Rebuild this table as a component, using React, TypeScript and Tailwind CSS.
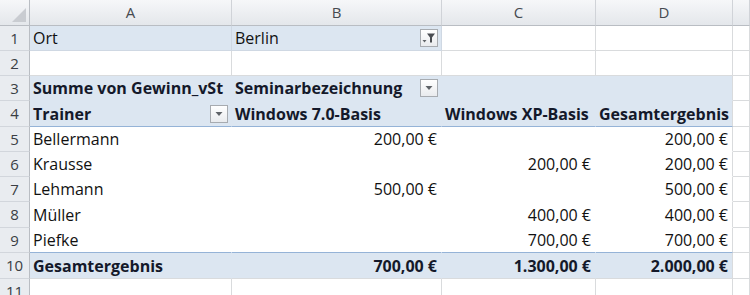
import React from 'react';

const BLUE = 'bg-[#dce6f1]';

type Cell = {
  text?: string;
  bold?: boolean;
  right?: boolean;
  cls: string;
  icon?: 'filter' | 'drop';
};

const grid = 'bg-white border-r border-b border-[#d9dbdd]';
const gridOnlyB = 'bg-white border-b border-[#d9dbdd] border-r border-r-[#d9dbdd]';

// pivot body cells: no visible gridlines
const body = 'bg-white border-r border-b border-white';
const bodyLast = 'bg-white border-r border-r-[#d9dbdd] border-b border-b-white';

const DropBox: React.FC<{ kind: 'filter' | 'drop' }> = ({ kind }) => (
  <div className="w-[18px] h-[18px] border border-[#a7abb0] bg-gradient-to-b from-white to-[#e9ebee] flex items-center justify-center shrink-0">
    {kind === 'drop' ? (
      <svg width="10" height="6" viewBox="0 0 10 6">
        <path d="M1.5 1 L8.5 1 L5 5 Z" fill="#5f6368" />
      </svg>
    ) : (
      <svg width="14" height="12" viewBox="0 0 14 12">
        <path d="M0.5 8 L4.5 8 L2.5 10.5 Z" fill="#5f6368" />
        <path d="M5 1.5 L13 1.5 L10 5.5 L10 10.5 L8 10.5 L8 5.5 Z" fill="#4a4d52" />
      </svg>
    )}
  </div>
);

const rows: Cell[][] = [
  [
    { text: 'Ort', cls: `${BLUE} border-r border-b border-[#cfd8e3]` },
    { text: 'Berlin', cls: `${BLUE} border-r border-b border-[#cfd8e3]`, icon: 'filter' },
    { cls: grid },
    { cls: grid },
    { cls: grid },
  ],
  [{ cls: grid }, { cls: grid }, { cls: grid }, { cls: grid }, { cls: grid }],
  [
    { text: 'Summe von Gewinn_vSt', bold: true, cls: `${BLUE} border-r border-b border-[#dce6f1]` },
    { text: 'Seminarbezeichnung', bold: true, cls: `${BLUE} border-r border-b border-[#dce6f1]`, icon: 'drop' },
    { cls: `${BLUE} border-r border-b border-[#dce6f1]` },
    { cls: `${BLUE} border-r border-r-[#d9dbdd] border-b border-b-[#dce6f1]` },
    { cls: grid },
  ],
  [
    { text: 'Trainer', bold: true, cls: `${BLUE} border-r border-r-[#dce6f1] border-b border-b-[#95b3d7]`, icon: 'drop' },
    { text: 'Windows 7.0-Basis', bold: true, cls: `${BLUE} border-r border-r-[#dce6f1] border-b border-b-[#95b3d7]` },
    { text: 'Windows XP-Basis', bold: true, cls: `${BLUE} border-r border-r-[#dce6f1] border-b border-b-[#95b3d7]` },
    { text: 'Gesamtergebnis', bold: true, cls: `${BLUE} border-r border-r-[#d9dbdd] border-b border-b-[#95b3d7]` },
    { cls: grid },
  ],
  [
    { text: 'Bellermann', cls: body },
    { text: '200,00 €', right: true, cls: body },
    { cls: body },
    { text: '200,00 €', right: true, cls: bodyLast },
    { cls: grid },
  ],
  [
    { text: 'Krausse', cls: body },
    { cls: body },
    { text: '200,00 €', right: true, cls: body },
    { text: '200,00 €', right: true, cls: bodyLast },
    { cls: grid },
  ],
  [
    { text: 'Lehmann', cls: body },
    { text: '500,00 €', right: true, cls: body },
    { cls: body },
    { text: '500,00 €', right: true, cls: bodyLast },
    { cls: grid },
  ],
  [
    { text: 'Müller', cls: body },
    { cls: body },
    { text: '400,00 €', right: true, cls: body },
    { text: '400,00 €', right: true, cls: bodyLast },
    { cls: grid },
  ],
  [
    { text: 'Piefke', cls: 'bg-white border-r border-r-white border-b border-b-[#95b3d7]' },
    { cls: 'bg-white border-r border-r-white border-b border-b-[#95b3d7]' },
    { text: '700,00 €', right: true, cls: 'bg-white border-r border-r-white border-b border-b-[#95b3d7]' },
    { text: '700,00 €', right: true, cls: 'bg-white border-r border-r-[#d9dbdd] border-b border-b-[#95b3d7]' },
    { cls: grid },
  ],
  [
    { text: 'Gesamtergebnis', bold: true, cls: `${BLUE} border-r border-r-[#dce6f1] border-b border-b-[#d9dbdd]` },
    { text: '700,00 €', bold: true, right: true, cls: `${BLUE} border-r border-r-[#dce6f1] border-b border-b-[#d9dbdd]` },
    { text: '1.300,00 €', bold: true, right: true, cls: `${BLUE} border-r border-r-[#dce6f1] border-b border-b-[#d9dbdd]` },
    { text: '2.000,00 €', bold: true, right: true, cls: `${BLUE} border-r border-r-[#d9dbdd] border-b border-b-[#d9dbdd]` },
    { cls: grid },
  ],
  [{ cls: grid }, { cls: grid }, { cls: grid }, { cls: grid }, { cls: gridOnlyB }],
];

const App: React.FC = () => {
  return (
    <div
      className="w-[750px] h-[295px] overflow-hidden bg-white text-[16px] text-[#111111]"
      style={{ fontFamily: '"Open Sans", "DejaVu Sans", sans-serif' }}
    >
      <div className="grid grid-cols-[30px_202px_210px_154px_137px_1fr] grid-rows-[26px_25px_25px_25px_26px_25px_25px_25px_26px_25px_26px_25px]">
        {/* Column headers */}
        <div className="bg-gradient-to-b from-[#f6f7f9] to-[#e4e7eb] border-r border-b border-[#b9bdc3] relative">
          <svg className="absolute right-[3px] bottom-[3px]" width="14" height="14" viewBox="0 0 14 14">
            <path d="M14 0 L14 14 L0 14 Z" fill="#c9ccd1" />
          </svg>
        </div>
        {['A', 'B', 'C', 'D', ''].map((l, i) => (
          <div
            key={i}
            className="bg-gradient-to-b from-[#f6f7f9] to-[#e4e7eb] border-r border-b border-r-[#d0d3d8] border-b-[#b9bdc3] flex items-center justify-center text-[15px] text-[#464a50]"
          >
            {l}
          </div>
        ))}

        {rows.map((r, ri) => (
          <React.Fragment key={ri}>
            <div className="bg-[#e9ecf0] border-r border-b border-r-[#b9bdc3] border-b-[#d2d6dc] flex items-center justify-center text-[15px] text-[#3a3e44]">
              {ri + 1}
            </div>
            {r.map((c, ci) => (
              <div
                key={ci}
                className={`${c.cls} flex items-center gap-1 px-[3px] overflow-hidden whitespace-nowrap ${
                  c.right ? 'justify-end pr-[4px]' : 'justify-between'
                } ${c.bold ? 'font-bold text-[#14192a]' : ''}`}
              >
                {c.text && <span>{c.text}</span>}
                {c.icon && <DropBox kind={c.icon} />}
              </div>
            ))}
          </React.Fragment>
        ))}
      </div>
    </div>
  );
};

export default App;
